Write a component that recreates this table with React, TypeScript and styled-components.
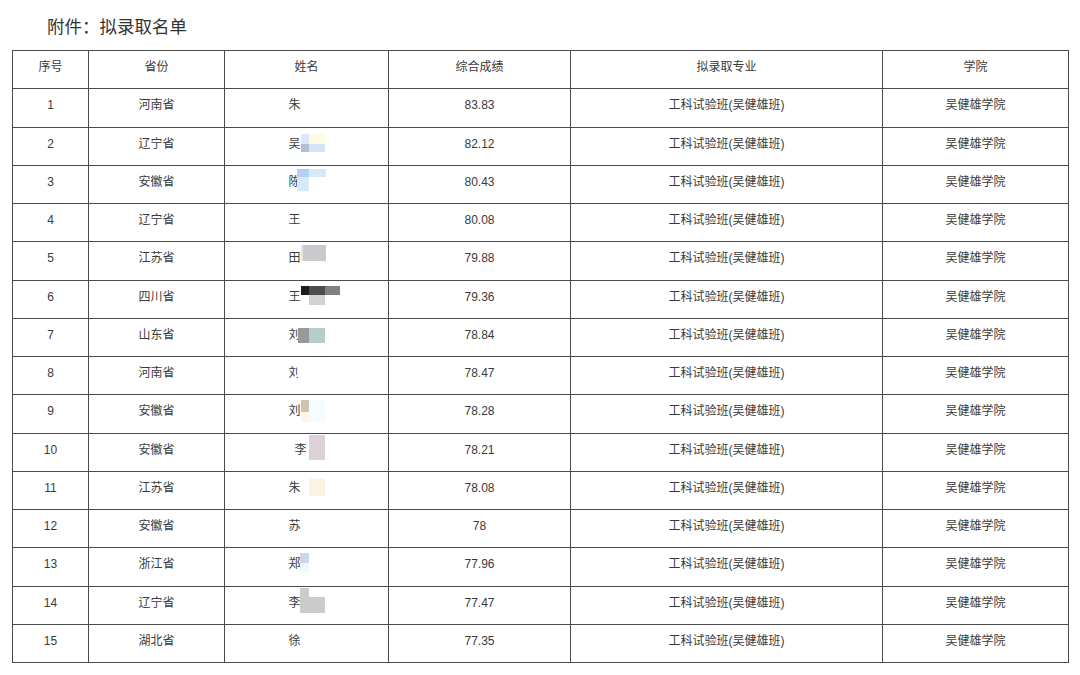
import React from "react";
import styled, { createGlobalStyle } from "styled-components";

const GlobalStyle = createGlobalStyle`
  html, body { margin: 0; padding: 0; background: #fff; }
  body { font-family: "Liberation Sans", "Noto Sans CJK SC", sans-serif; color: #333; }
`;

const Page = styled.div`
  width: 1080px;
  height: 675px;
  background: #fff;
  overflow: hidden;
`;

const Title = styled.h1`
  margin: 0;
  height: 50px;
  box-sizing: border-box;
  padding: 14px 0 0 47px;
  font-size: 17.5px;
  line-height: 26px;
  font-weight: 400;
  color: #333;
  font-family: "Liberation Sans", "Noto Sans CJK SC", sans-serif;
`;

const Table = styled.table`
  margin-left: 12px;
  width: 1056px;
  border-collapse: collapse;
  table-layout: fixed;
  font-size: 12px;
  color: #3a3a3a;
`;

const Col = styled.col<{ $w: number }>`
  width: ${(p) => p.$w}px;
`;

const Row = styled.tr`
  height: 38.25px;
`;

const HeadCell = styled.th`
  box-sizing: border-box;
  border: 1px solid #4a4a4a;
  font-weight: 400;
  text-align: center;
  vertical-align: middle;
  padding: 0 0 5px;
  line-height: 14px;
`;

const Cell = styled.td`
  box-sizing: border-box;
  border: 1px solid #4a4a4a;
  text-align: center;
  vertical-align: middle;
  padding: 0 0 5px;
  line-height: 14px;
  white-space: nowrap;
`;

const NameText = styled.span<{ $chars: number }>`
  position: relative;
  display: inline-block;
  width: ${(p) => p.$chars * 12}px;
  text-align: left;
  line-height: 14px;
  vertical-align: top;
`;

const Mosaic = styled.span<{ $x: number; $y: number; $w: number; $h: number; $c: string }>`
  position: absolute;
  left: ${(p) => p.$x}px;
  top: ${(p) => p.$y}px;
  width: ${(p) => p.$w}px;
  height: ${(p) => p.$h}px;
  background: ${(p) => p.$c};
`;

type Block = [number, number, number, number, string];

interface Item {
  prov: string;
  name: string;
  chars: number;
  score: string;
  blocks: Block[];
}

const W = "#ffffff";

const data: Item[] = [
  { prov: "河南省", name: "朱", chars: 3, score: "83.83", blocks: [] },
  {
    prov: "辽宁省", name: "吴", chars: 3, score: "82.12",
    blocks: [
      [12, -3, 8, 10, "#dbe8fb"],
      [20, -3, 16, 10, "#fefbe3"],
      [12, 7, 8, 8, "#b0bfd5"],
      [20, 7, 16, 8, "#d5e3f5"],
    ],
  },
  {
    prov: "安徽省", name: "陈", chars: 3, score: "80.43",
    blocks: [
      [8, -6, 12, 8, "#b3cff2"],
      [20, -6, 17, 8, "#d9e9fc"],
      [8, 2, 12, 14, "#d8e8fb"],
      [20, 2, 17, 14, W],
    ],
  },
  { prov: "辽宁省", name: "王", chars: 3, score: "80.08", blocks: [] },
  {
    prov: "江苏省", name: "田", chars: 3, score: "79.88",
    blocks: [
      [12, -6, 2, 16, "#e4e5e7"],
      [14, -6, 23, 16, "#c9cacd"],
    ],
  },
  {
    prov: "四川省", name: "王", chars: 3, score: "79.36",
    blocks: [
      [12, -4, 8, 9, "#1c1c1c"],
      [20, -4, 16, 9, "#4d4d4d"],
      [36, -4, 15, 9, "#808080"],
      [20, 5, 16, 10, "#cfd3d2"],
    ],
  },
  {
    prov: "山东省", name: "刘", chars: 3, score: "78.84",
    blocks: [
      [9, 0, 11, 15, "#989898"],
      [20, 0, 16, 15, "#b7cdcb"],
    ],
  },
  {
    prov: "河南省", name: "刘", chars: 3, score: "78.47",
    blocks: [[9, -2, 16, 16, W]],
  },
  {
    prov: "安徽省", name: "刘", chars: 3, score: "78.28",
    blocks: [
      [12, -4, 8, 12, "#d0c3b1"],
      [12, 8, 8, 10, "#fdf5e6"],
      [20, -4, 16, 22, "#f4fcff"],
    ],
  },
  {
    prov: "安徽省", name: "李", chars: 2, score: "78.21",
    blocks: [[14, -8, 16, 25, "#ddd0d9"]],
  },
  {
    prov: "江苏省", name: "朱", chars: 3, score: "78.08",
    blocks: [[20, -2, 16, 17, "#fdf2e2"]],
  },
  { prov: "安徽省", name: "苏", chars: 3, score: "78", blocks: [] },
  {
    prov: "浙江省", name: "郑", chars: 3, score: "77.96",
    blocks: [
      [11, -4, 9, 10, "#cad7eb"],
      [11, 6, 9, 9, "#e8fbff"],
    ],
  },
  {
    prov: "辽宁省", name: "李", chars: 3, score: "77.47",
    blocks: [
      [11, -8, 9, 25, "#c9cdcd"],
      [20, 1, 16, 16, "#cccccc"],
    ],
  },
  { prov: "湖北省", name: "徐", chars: 3, score: "77.35", blocks: [] },
];

const headers: [string, number][] = [
  ["序号", 76],
  ["省份", 136],
  ["姓名", 164],
  ["综合成绩", 182],
  ["拟录取专业", 312],
  ["学院", 186],
];

export default function App() {
  return (
    <Page>
      <GlobalStyle />
      <Title>附件：拟录取名单</Title>
      <Table>
        <colgroup>
          {headers.map(([h, w]) => (
            <Col key={h} $w={w} />
          ))}
        </colgroup>
        <thead>
          <Row>
            {headers.map(([h]) => (
              <HeadCell key={h}>{h}</HeadCell>
            ))}
          </Row>
        </thead>
        <tbody>
          {data.map((d, i) => (
            <Row key={i}>
              <Cell>{i + 1}</Cell>
              <Cell>{d.prov}</Cell>
              <Cell>
                <NameText $chars={d.chars}>
                  {d.name}
                  {d.blocks.map(([x, y, w, h, c], j) => (
                    <Mosaic key={j} $x={x} $y={y} $w={w} $h={h} $c={c} />
                  ))}
                </NameText>
              </Cell>
              <Cell>{d.score}</Cell>
              <Cell>工科试验班(吴健雄班)</Cell>
              <Cell>吴健雄学院</Cell>
            </Row>
          ))}
        </tbody>
      </Table>
    </Page>
  );
}
